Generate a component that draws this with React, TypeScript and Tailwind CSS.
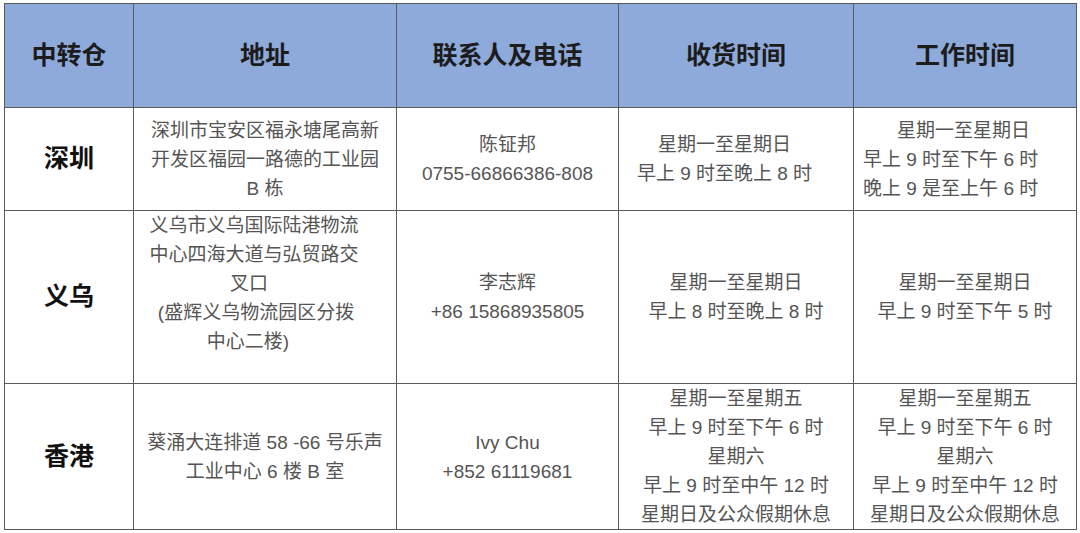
import React from 'react';

type Line = { text: string; cls?: string };

type Row = {
  name: string;
  height: string;
  address: Line[];
  addressCls?: string;
  contact: Line[];
  receive: Line[];
  receiveCls?: string;
  work: Line[];
  workCls?: string;
};

const L = (text: string, cls?: string): Line => ({ text, cls });

const rows: Row[] = [
  {
    name: '深圳',
    height: 'h-[103px]',
    address: [L('深圳市宝安区福永塘尾高新'), L('开发区福园一路德的工业园'), L('B 栋')],
    contact: [L('陈钲邦'), L('0755-66866386-808')],
    receive: [L('星期一至星期日'), L('早上 9 时至晚上 8 时')],
    receiveCls: 'pr-[23px]',
    work: [L('星期一至星期日', 'pl-[34px]'), L('早上 9 时至下午 6 时'), L('晚上 9 是至上午 6 时')],
    workCls: 'text-left pl-[9px]',
  },
  {
    name: '义乌',
    height: 'h-[173px]',
    address: [
      L('义乌市义乌国际陆港物流'),
      L('中心四海大道与弘贸路交'),
      L('叉口', 'pr-[10px]'),
      L('(盛辉义乌物流园区分拨', 'pl-[4px]'),
      L('中心二楼)', 'pr-[12px]'),
    ],
    addressCls: 'align-top pr-[22px]',
    contact: [L('李志辉'), L('+86 15868935805')],
    receive: [L('星期一至星期日'), L('早上 8 时至晚上 8 时')],
    work: [L('星期一至星期日'), L('早上 9 时至下午 5 时')],
  },
  {
    name: '香港',
    height: 'h-[144px]',
    address: [L('葵涌大连排道 58 -66 号乐声'), L('工业中心 6 楼 B 室')],
    contact: [L('Ivy Chu'), L('+852 61119681')],
    receive: [L('星期一至星期五'), L('早上 9 时至下午 6 时'), L('星期六'), L('早上 9 时至中午 12 时'), L('星期日及公众假期休息')],
    work: [L('星期一至星期五'), L('早上 9 时至下午 6 时'), L('星期六'), L('早上 9 时至中午 12 时'), L('星期日及公众假期休息')],
  },
];

const headers = ['中转仓', '地址', '联系人及电话', '收货时间', '工作时间'];

function Cell({ items, extra = '' }: { items: Line[]; extra?: string }) {
  return (
    <td className={`border border-[#5a5a5a] text-[19px] leading-[29px] text-[#555] text-center align-middle p-0 ${extra}`}>
      {items.map((l, i) => (
        <div key={i} className={`whitespace-pre ${l.cls ?? ''}`}>{l.text}</div>
      ))}
    </td>
  );
}

export default function App() {
  return (
    <div
      className="w-[1080px] h-[533px] bg-white pl-[4px] pt-[3px]"
      style={{ fontFamily: '"Liberation Sans", "Noto Sans CJK SC", sans-serif' }}
    >
      <table className="border-collapse table-fixed w-[1072px]">
        <colgroup>
          <col className="w-[129px]" />
          <col className="w-[263px]" />
          <col className="w-[222px]" />
          <col className="w-[235px]" />
          <col className="w-[223px]" />
        </colgroup>
        <thead>
          <tr className="h-[104px] bg-[#8eaadb]">
            {headers.map((h) => (
              <th key={h} className="border border-[#5a5a5a] text-[25px] font-bold text-[#1c1c1c] text-center align-middle p-0">
                {h}
              </th>
            ))}
          </tr>
        </thead>
        <tbody>
          {rows.map((r) => (
            <tr key={r.name} className={r.height}>
              <td className="border border-[#5a5a5a] text-[25px] font-bold text-[#111] text-center align-middle p-0">
                {r.name}
              </td>
              <Cell items={r.address} extra={r.addressCls} />
              <Cell items={r.contact} />
              <Cell items={r.receive} extra={r.receiveCls} />
              <Cell items={r.work} extra={r.workCls} />
            </tr>
          ))}
        </tbody>
      </table>
    </div>
  );
}
